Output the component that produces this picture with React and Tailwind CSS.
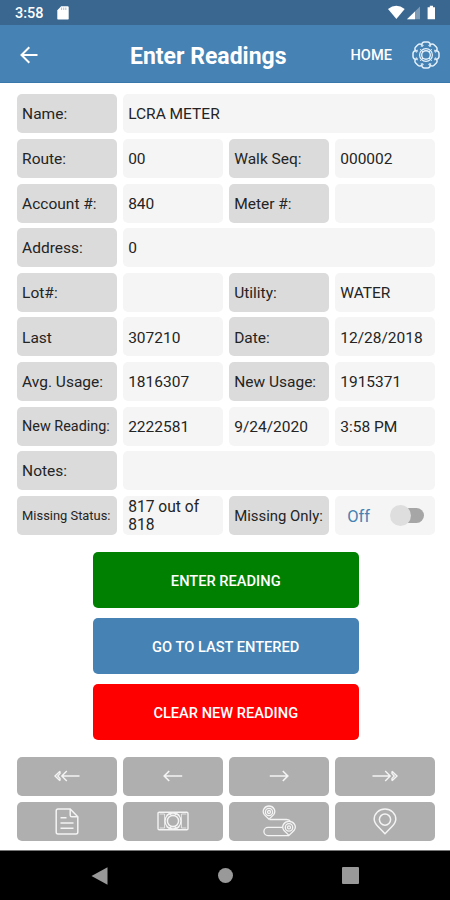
import React, { useState } from "react";

const ROWS = [
  [{ label: "Name:" }, { value: "LCRA METER", wide: true }],
  [
    { label: "Route:" },
    { value: "00" },
    { label: "Walk Seq:" },
    { value: "000002" },
  ],
  [
    { label: "Account #:" },
    { value: "840" },
    { label: "Meter #:" },
    { value: "" },
  ],
  [{ label: "Address:" }, { value: "0", wide: true }],
  [
    { label: "Lot#:" },
    { value: "" },
    { label: "Utility:" },
    { value: "WATER" },
  ],
  [
    { label: "Last" },
    { value: "307210" },
    { label: "Date:" },
    { value: "12/28/2018" },
  ],
  [
    { label: "Avg. Usage:" },
    { value: "1816307" },
    { label: "New Usage:" },
    { value: "1915371" },
  ],
  [
    { label: "New Reading:", size: "text-[14.4px]" },
    { value: "2222581" },
    { value: "9/24/2020" },
    { value: "3:58 PM" },
  ],
  [{ label: "Notes:" }, { value: "", wide: true }],
];

function Cell({ cell }) {
  const bg = cell.label ? "bg-[#dbdbdb]" : "bg-[#f5f5f5]";
  const span = cell.wide ? "col-span-3" : "";
  return (
    <div
      className={`flex items-center rounded-[5px] pl-[5.6px] pt-[1.4px] whitespace-nowrap ${bg} ${span} ${cell.size || "text-[15.5px]"}`}
    >
      {cell.label || cell.value}
    </div>
  );
}

function StatusBar() {
  return (
    <div className="flex h-[25px] items-center bg-[#396790] pl-[15px] pr-[15px] text-white">
      <span className="pt-[3px] text-[14.5px] font-medium leading-none">3:58</span>
      <svg className="ml-[13px]" width="12" height="14" viewBox="0 0 12 14">
        <path d="M4.2 0.3H10.6Q11.7 0.3 11.7 1.4V12.4Q11.7 13.6 10.5 13.6H1.5Q0.3 13.6 0.3 12.4V4.3Z" fill="#fff" />
        <path d="M4.6 1.6V4M6.7 1.6V4M8.8 1.6V4" stroke="#b4c4d3" strokeWidth="1.1" />
      </svg>
      <svg className="ml-auto" width="47" height="15" viewBox="0 0 47 15">
        <path d="M0 4Q8.3 -2.4 16.7 4L8.4 14Z" fill="#fff" />
        <path d="M32 1.6V14.2H19Z" fill="#7e9bb5" />
        <path d="M27 6.5V14.2H19Z" fill="#fff" />
        <path d="M41.8 0.8H45V2.2H47V14.3H39.6V2.2H41.8Z" fill="#fff" />
      </svg>
    </div>
  );
}

function GearIcon() {
  return (
    <svg width="28" height="28" viewBox="-14 -14 28 28" fill="none" stroke="#e4f1fb" strokeWidth="1.5">
      {[0, 45, 90, 135, 180, 225, 270, 315].map((a) => (
        <path
          key={a}
          transform={`rotate(${a})`}
          d="M-3.9 -9.4C-5 -11.6 -3 -13 -1.6 -13H1.6C3 -13 5 -11.6 3.9 -9.4"
        />
      ))}
      {/* notches between the teeth */}
      {[22.5, 67.5, 112.5, 157.5, 202.5, 247.5, 292.5, 337.5].map((a) => (
        <path key={a} transform={`rotate(${a})`} d="M-1.4 -10.4Q0 -8.6 1.4 -10.4" strokeWidth="1" />
      ))}
      <circle r="6.4" strokeWidth="1.2" />
      <circle r="4.3" strokeWidth="1.4" />
      <path d="M-5.8 -5.8L-3 -3M5.8 -5.8L3 -3M5.8 5.8L3 3M-5.8 5.8L-3 3" strokeWidth="1" />
    </svg>
  );
}

function Header() {
  return (
    <div className="grid h-[58px] grid-cols-[130px_1fr_99.5px] items-center border-b border-[#3978ab] bg-[#4682b4] text-white">
      <button className="pl-[20px] pt-[2px]">
        <svg width="18" height="18" viewBox="0 0 18 18" fill="none" stroke="#fff" strokeWidth="2">
          <path d="M17.5 9H2M9.3 1.2L1.5 9L9.3 16.8" />
        </svg>
      </button>
      <h1 className="whitespace-nowrap pt-[6px] text-[23px] font-bold leading-none">
        Enter Readings
      </h1>
      <div className="flex items-center pt-[2px]">
        <span className="w-[61.5px] pt-[2px] text-[14.6px] font-medium">HOME</span>
        <GearIcon />
      </div>
    </div>
  );
}

// toolbar icons, thin white line drawings
function Icon({ name }) {
  const base = { fill: "none", stroke: "#f4f4f4", strokeWidth: 1.4 };
  switch (name) {
    case "first":
      return (
        <svg width="26" height="12" viewBox="0 0 26 12" {...base}>
          <path d="M8 6H25.5M12.8 1L7.8 6L12.8 11M6 1.2L1 6L6 10.8M6 1.2V3.6L3.8 6L6 8.4V10.8" />
        </svg>
      );
    case "prev":
      return (
        <svg width="20" height="12" viewBox="0 0 20 12" {...base} strokeWidth="1.6">
          <path d="M19.2 6H1.2M6.2 1L1.2 6L6.2 11" />
        </svg>
      );
    case "next":
      return (
        <svg width="20" height="12" viewBox="0 0 20 12" {...base} strokeWidth="1.6">
          <path d="M0.8 6H18.8M13.8 1L18.8 6L13.8 11" />
        </svg>
      );
    case "last":
      return (
        <svg width="26" height="12" viewBox="0 0 26 12" {...base}>
          <path d="M0.5 6H18M13.2 1L18.2 6L13.2 11M20 1.2L25 6L20 10.8M20 1.2V3.6L22.2 6L20 8.4V10.8" />
        </svg>
      );
    case "note":
      return (
        <svg width="24" height="27" viewBox="0 0 24 27" {...base} strokeWidth="1.5">
          <path d="M3 1H15.2L22.8 8.8V24.3Q22.8 26 21 26H3Q1.2 26 1.2 24.3V2.8Q1.2 1 3 1Z" />
          <path d="M15.2 1V7.2Q15.2 8.8 16.8 8.8H22.8M5.5 9.8H11.5M5.5 15H18.5M5.5 20.3H18.5" />
        </svg>
      );
    case "camera":
      return (
        <svg width="32" height="20" viewBox="0 0 32 20" {...base}>
          <rect x="1" y="1.2" width="30" height="17.6" rx="1.2" />
          <path d="M2.6 3H7.6V17H2.6M29.4 3H24.4V17H29.4" strokeWidth="0.8" />
          <circle cx="16" cy="10" r="8" strokeWidth="1.3" />
          <circle cx="16" cy="10" r="5.6" strokeWidth="1.5" />
          <path d="M9.5 4.5L12 2.6L14.5 4.2H17.5L20 2.6L22.5 4.5M9.5 15.5L12 17.4L14.5 15.8H17.5L20 17.4L22.5 15.5" strokeWidth="1.1" />
        </svg>
      );
    case "route":
      return (
        <svg width="34" height="32" viewBox="0 0 34 32" {...base} strokeWidth="1.3">
          <path d="M7 14.2L2.3 9.6C-0.5 5.8 2.6 1 7 1S14.5 5.8 11.7 9.6Z" />
          <circle cx="7" cy="7" r="3.6" />
          <circle cx="7" cy="7" r="1.5" />
          <path d="M7.5 14.5H24.5Q27.5 14.5 29 17M20.5 22.4H6A4.1 4.1 0 0 0 6 30.6H27" />
          <path d="M27 30.4L21.8 25.2C19 21.4 22 16.4 27 16.4S35 21.4 32.2 25.2Z" />
          <circle cx="27" cy="22.4" r="3.7" />
          <circle cx="27" cy="22.4" r="1.5" />
        </svg>
      );
    default:
      return (
        <svg width="24" height="27" viewBox="0 0 24 27" {...base} strokeWidth="1.5">
          <path d="M12 25.7L5 18.5C2.4 15.8 1.2 14 1.2 11.2C1.2 5.3 6 1.1 12 1.1S22.8 5.3 22.8 11.2C22.8 14 21.6 15.8 19 18.5Z" />
          <circle cx="12" cy="11.6" r="5.6" />
        </svg>
      );
  }
}

const TOOLS = ["first", "prev", "next", "last", "note", "camera", "route", "pin"];

function App() {
  const [missingOnly, setMissingOnly] = useState(false);

  return (
    <div className="flex h-[900px] w-[450px] flex-col bg-white font-['Roboto',sans-serif] text-[#242424]">
      <StatusBar />
      <Header />

      <div className="flex-1 pl-[16.5px] pr-[15px] pt-[11.3px]">
        {/* account details */}
        <div className="grid auto-rows-[39px] grid-cols-4 gap-x-[5.7px] gap-y-[5.63px] leading-[18px]">
          {ROWS.flat().map((cell, i) => (
            <Cell key={i} cell={cell} />
          ))}
          <Cell cell={{ label: "Missing Status:", size: "text-[12.9px]" }} />
          <div className="flex items-center rounded-[5px] bg-[#f5f5f5] pl-[5.6px] pt-[2px] text-[15.6px]">
            817 out of
            <br />
            818
          </div>
          <Cell cell={{ label: "Missing Only:", size: "text-[14.9px]" }} />
          <div className="flex items-center justify-between rounded-[5px] bg-[#f5f5f5] pl-[12.5px] pr-[11px]">
            <span className="pt-[3px] text-[16.5px] text-[#4682b4]">
              {missingOnly ? "On" : "Off"}
            </span>
            <button
              onClick={() => setMissingOnly(!missingOnly)}
              className="flex h-[22px] w-[34px] items-center"
            >
              <span className="z-10 h-[21px] w-[21px] shrink-0 rounded-full bg-[#dedede]" />
              <span className="-ml-[5px] h-[15px] w-[18px] rounded-r-full bg-[#a6a6a6]" />
            </button>
          </div>
        </div>

        {/* actions */}
        <div className="mx-auto mt-[17.5px] flex w-[266px] flex-col gap-[10.7px] text-[14.65px] font-medium text-white">
          <button className="h-[55.3px] rounded-[5px] bg-[#008000] pt-[3px]">ENTER READING</button>
          <button className="h-[55.3px] rounded-[5px] bg-[#4682b4] pt-[3px]">GO TO LAST ENTERED</button>
          <button className="h-[55.3px] rounded-[5px] bg-[#ff0000] pt-[3px]">CLEAR NEW READING</button>
        </div>

        {/* toolbar */}
        <div className="mt-[17.3px] grid auto-rows-[39px] grid-cols-4 gap-x-[5.7px] gap-y-[5.63px]">
          {TOOLS.map((name) => (
            <button
              key={name}
              className="flex items-center justify-center rounded-[5px] bg-[#afafaf]"
            >
              <Icon name={name} />
            </button>
          ))}
        </div>
      </div>

      {/* system navigation */}
      <div className="flex h-[50px] items-center justify-between border-t border-[#777] bg-black pl-[91px] pr-[91px]">
        <svg width="17" height="18" viewBox="0 0 17 18">
          <path d="M16.5 0.3V17.7L0.5 9Z" fill="#999" />
        </svg>
        <span className="h-[15px] w-[15px] rounded-full bg-[#999]" />
        <span className="h-[17px] w-[17px] rounded-[1px] bg-[#999]" />
      </div>
    </div>
  );
}

export default App;
